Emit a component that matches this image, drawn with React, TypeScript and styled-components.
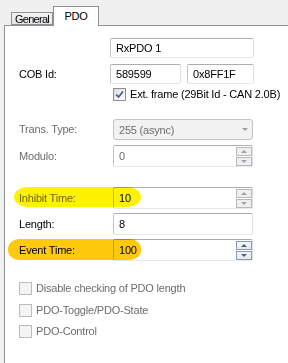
import React from 'react';
import styled, { createGlobalStyle } from 'styled-components';

const GlobalStyle = createGlobalStyle`
  html, body {
    margin: 0;
    padding: 0;
    background: #f0f0f0;
  }
  body {
    font-family: 'Liberation Sans', Arial, sans-serif;
    font-size: 11px;
    letter-spacing: -0.2px;
  }
`;

const Window = styled.div`
  position: relative;
  width: 288px;
  height: 363px;
  display: flex;
  flex-direction: column;
  background: #f0f0f0;
  overflow: hidden;
`;

const TabStrip = styled.div`
  display: flex;
  align-items: flex-end;
  height: 25px;
  padding-left: 11px;
`;

const Tab = styled.div<{ $active?: boolean }>`
  position: relative;
  z-index: ${(p) => (p.$active ? 2 : 1)};
  box-sizing: border-box;
  display: flex;
  align-items: ${(p) => (p.$active ? 'flex-start' : 'center')};
  justify-content: center;
  width: ${(p) => (p.$active ? 46 : 42)}px;
  height: ${(p) => (p.$active ? 20 : 13)}px;
  margin-bottom: ${(p) => (p.$active ? -1 : 0)}px;
  padding-top: ${(p) => (p.$active ? 3 : 0)}px;
  border: 1px solid #8e9095;
  border-bottom: ${(p) => (p.$active ? 'none' : '1px solid #8e9095')};
  background: ${(p) =>
    p.$active ? '#ffffff' : 'linear-gradient(#f2f2f2, #e4e4e4)'};
  color: #000;
  font-size: 11px;
  line-height: 12px;
  letter-spacing: ${(p) => (p.$active ? -0.2 : -0.7)}px;
  white-space: nowrap;
`;

const Panel = styled.div`
  flex: 1;
  margin-left: 4px;
  border-left: 1px solid #8e9095;
  border-top: 1px solid #8e9095;
  background: #ffffff;
  padding: 12px 0 0 14px;
  display: flex;
  flex-direction: column;
`;

const Row = styled.div<{ $top: number; $labelWidth: number; $fieldWidth: number }>`
  display: grid;
  grid-template-columns: ${(p) => p.$labelWidth}px ${(p) => p.$fieldWidth}px;
  align-items: center;
  margin-top: ${(p) => p.$top}px;
`;

const Label = styled.span<{ $disabled?: boolean }>`
  color: ${(p) => (p.$disabled ? '#6d6d6d' : '#000')};
  white-space: nowrap;
  line-height: 13px;
`;

const Pair = styled.div`
  display: grid;
  grid-template-columns: 71px 67px;
  column-gap: 6px;
`;

const TextBox = styled.div<{ $height?: number; $disabled?: boolean }>`
  position: relative;
  box-sizing: border-box;
  height: ${(p) => p.$height ?? 20}px;
  display: flex;
  align-items: center;
  padding-left: 5px;
  border: 1px solid;
  border-color: #abadb3 #dbdfe6 #e3e9ef #c2c6cc;
  border-radius: 2px;
  background: #ffffff;
  color: ${(p) => (p.$disabled ? '#6d6d6d' : '#000')};
`;

const ComboBox = styled.div`
  box-sizing: border-box;
  height: 21px;
  display: flex;
  align-items: center;
  justify-content: space-between;
  padding: 0 4px 0 5px;
  border: 1px solid #c4c4c4;
  border-radius: 3px;
  background: #f2f2f2;
  color: #6d6d6d;
`;

const Arrow = styled.span<{ $dir: 'up' | 'down'; $color: string }>`
  width: 0;
  height: 0;
  border-left: 3px solid transparent;
  border-right: 3px solid transparent;
  ${(p) =>
    p.$dir === 'down'
      ? `border-top: 3px solid ${p.$color};`
      : `border-bottom: 3px solid ${p.$color};`}
`;

const SpinColumn = styled.div`
  position: absolute;
  right: 0;
  top: 1px;
  display: flex;
  flex-direction: column;
  gap: 1px;
`;

const SpinButton = styled.div<{ $active?: boolean }>`
  box-sizing: border-box;
  width: 16px;
  height: 9px;
  display: flex;
  align-items: center;
  justify-content: center;
  border: 1px solid ${(p) => (p.$active ? '#8f99ad' : '#b9b9b9')};
  background: ${(p) => (p.$active ? 'linear-gradient(#f4f6fa, #e4e8f0)' : '#efefef')};
`;

const CheckRow = styled.label<{ $top: number; $indent: number }>`
  display: flex;
  align-items: center;
  gap: 4px;
  height: 13px;
  margin-top: ${(p) => p.$top}px;
  margin-left: ${(p) => p.$indent}px;
`;

const Box = styled.span<{ $disabled?: boolean }>`
  box-sizing: border-box;
  width: 13px;
  height: 13px;
  display: flex;
  align-items: center;
  justify-content: center;
  border: 1px solid ${(p) => (p.$disabled ? '#bcbcbc' : '#8e8f8f')};
  background: ${(p) => (p.$disabled ? '#f4f4f4' : 'linear-gradient(135deg, #dcdcdc, #ffffff)')};
`;

const Highlight = styled.div<{ $color: string }>`
  position: absolute;
  background: ${(p) => p.$color};
  mix-blend-mode: multiply;
  pointer-events: none;
`;

function Spin({ value, active, disabled }: { value: string; active?: boolean; disabled?: boolean }) {
  const color = active ? '#4d5f8c' : '#a3a3a3';
  return (
    <TextBox $height={22} $disabled={disabled}>
      {value}
      <SpinColumn>
        <SpinButton $active={active}>
          <Arrow $dir="up" $color={color} />
        </SpinButton>
        <SpinButton $active={active}>
          <Arrow $dir="down" $color={color} />
        </SpinButton>
      </SpinColumn>
    </TextBox>
  );
}

function CheckBox({
  label,
  checked,
  disabled,
  top,
  indent,
}: {
  label: string;
  checked?: boolean;
  disabled?: boolean;
  top: number;
  indent: number;
}) {
  return (
    <CheckRow $top={top} $indent={indent}>
      <Box $disabled={disabled}>
        {checked && (
          <svg width="9" height="9" viewBox="0 0 9 9">
            <path d="M1 4.5 L3.5 7 L8 1.5" fill="none" stroke="#4a5d94" strokeWidth="1.7" />
          </svg>
        )}
      </Box>
      <Label $disabled={disabled}>{label}</Label>
    </CheckRow>
  );
}

export default function App() {
  return (
    <Window>
      <GlobalStyle />
      <TabStrip>
        <Tab>General</Tab>
        <Tab $active>PDO</Tab>
      </TabStrip>
      <Panel>
        <Row $top={0} $labelWidth={91} $fieldWidth={144}>
          <span />
          <TextBox>RxPDO 1</TextBox>
        </Row>
        <Row $top={6} $labelWidth={91} $fieldWidth={144}>
          <Label>COB Id:</Label>
          <Pair>
            <TextBox>589599</TextBox>
            <TextBox>0x8FF1F</TextBox>
          </Pair>
        </Row>
        <CheckBox label="Ext. frame (29Bit Id - CAN 2.0B)" checked top={4} indent={94} />

        <Row $top={18} $labelWidth={94} $fieldWidth={140}>
          <Label $disabled>Trans. Type:</Label>
          <ComboBox>
            255 (async)
            <Arrow $dir="down" $color="#9c9c9c" />
          </ComboBox>
        </Row>
        <Row $top={5} $labelWidth={94} $fieldWidth={140}>
          <Label $disabled>Modulo:</Label>
          <Spin value="0" disabled />
        </Row>

        <Row $top={20} $labelWidth={94} $fieldWidth={140}>
          <Label $disabled>Inhibit Time:</Label>
          <Spin value="10" />
        </Row>
        <Row $top={4} $labelWidth={94} $fieldWidth={140}>
          <Label>Length:</Label>
          <TextBox $height={22}>8</TextBox>
        </Row>
        <Row $top={4} $labelWidth={94} $fieldWidth={140}>
          <Label>Event Time:</Label>
          <Spin value="100" active />
        </Row>

        <CheckBox label="Disable checking of PDO length" disabled top={21} indent={0} />
        <CheckBox label="PDO-Toggle/PDO-State" disabled top={9} indent={0} />
        <CheckBox label="PDO-Control" disabled top={8} indent={0} />
      </Panel>

      <Highlight $color="#fff200" style={{ left: 14, top: 187, width: 127, height: 20, borderRadius: '13px / 10px' }} />
      <Highlight $color="#ffc90e" style={{ left: 8, top: 239, width: 133, height: 21, borderRadius: '11px / 10px' }} />
    </Window>
  );
}
